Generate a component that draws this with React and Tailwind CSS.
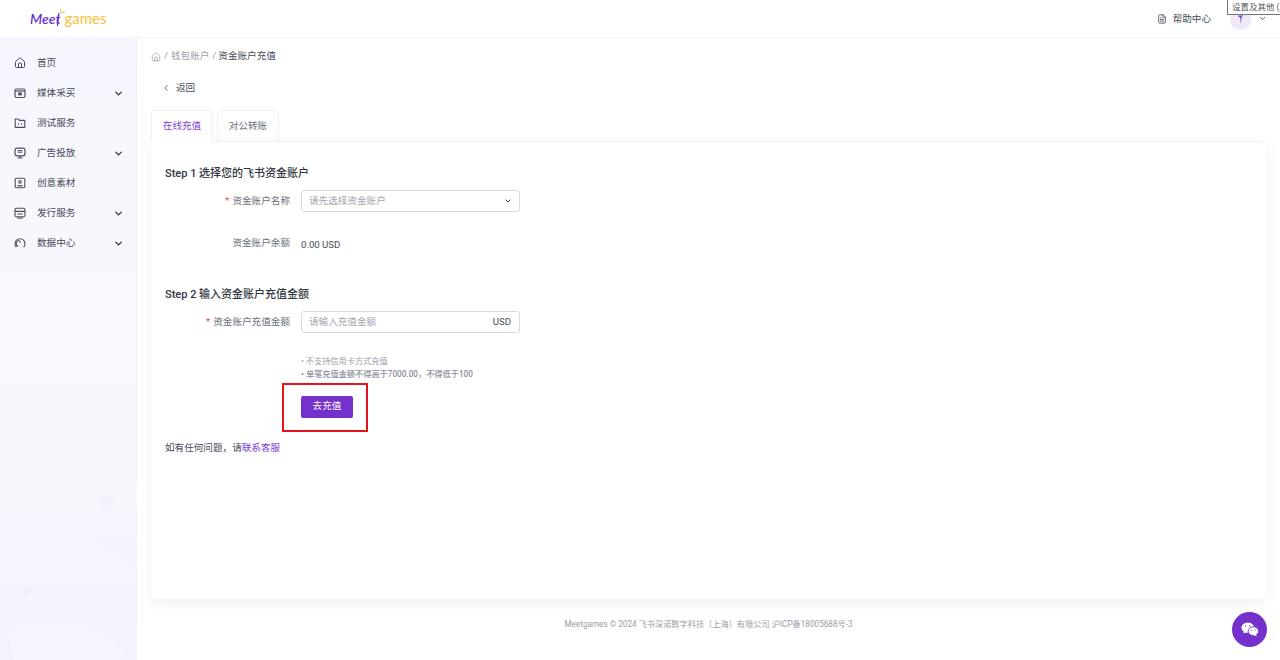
import React from 'react';
import { Home, ChevronDown, ChevronLeft, FileText } from 'lucide-react';

const fontStack = "font-['Roboto','Noto_Sans_CJK_SC',sans-serif]";

const MediaIcon = () => (
    <svg width="12" height="12" viewBox="0 0 12 12" fill="none" stroke="#4b4f5c" strokeWidth="1.2">
        <rect x="1" y="2" width="10" height="8.5" rx="1.5" />
        <path d="M1 4h10" />
        <rect x="4.2" y="5.4" width="3.6" height="3" fill="#4b4f5c" stroke="none" />
    </svg>
);

const FolderIcon = () => (
    <svg width="12" height="12" viewBox="0 0 12 12" fill="none" stroke="#4b4f5c" strokeWidth="1.1">
        <path d="M1.2 2h3.2l1 1.4h5.4v7H1.2z" strokeLinejoin="round" />
        <path d="M5 6l-1 1 1 1M7 6l1 1-1 1" strokeWidth="0.8" />
    </svg>
);

const AdIcon = () => (
    <svg width="12" height="12" viewBox="0 0 12 12" fill="none" stroke="#4b4f5c" strokeWidth="1.2">
        <rect x="1" y="1.2" width="10" height="7.6" rx="2" />
        <path d="M3.5 11h5M6 9v2" />
        <path d="M3.6 3.6h4.8M3.6 5.2h4.8" strokeWidth="1" />
    </svg>
);

const CreativeIcon = () => (
    <svg width="12" height="12" viewBox="0 0 12 12" fill="none" stroke="#4b4f5c" strokeWidth="1.1">
        <rect x="1.2" y="1.2" width="9.6" height="9.6" rx="1.2" />
        <circle cx="6" cy="4.8" r="1.3" />
        <path d="M3.4 8.8h5.2" strokeWidth="1.3" />
    </svg>
);

const PublishIcon = () => (
    <svg width="12" height="12" viewBox="0 0 12 12" fill="none" stroke="#4b4f5c" strokeWidth="1.1">
        <rect x="1" y="1.2" width="10" height="8.6" rx="1.6" />
        <path d="M1 4.4h10M3.4 7h5.2" />
        <path d="M3 11h6" />
    </svg>
);

const DataIcon = () => (
    <svg width="12" height="12" viewBox="0 0 12 12" fill="none" stroke="#4b4f5c" strokeWidth="1.1">
        <path d="M2.4 10.2A5 5 0 1 1 9.6 10.2" />
        <path d="M4.2 9.4A3 3 0 0 1 5.6 3.6" />
        <path d="M6 6V4" />
    </svg>
);

const menu = [
    { label: '首页', icon: <Home size={12} color="#4b4f5c" /> },
    { label: '媒体采买', icon: <MediaIcon />, arrow: true },
    { label: '测试服务', icon: <FolderIcon /> },
    { label: '广告投放', icon: <AdIcon />, arrow: true },
    { label: '创意素材', icon: <CreativeIcon /> },
    { label: '发行服务', icon: <PublishIcon />, arrow: true },
    { label: '数据中心', icon: <DataIcon />, arrow: true },
];

const Sidebar = () => (
    <aside className="relative w-[137px] shrink-0 bg-gradient-to-b from-[#f6f7fe] via-[#f8f9fe] to-[#f4f3fd] border-r border-[#f0f1f8] pt-[10px]">
        <svg className="absolute left-0 bottom-0" width="137" height="240" viewBox="0 0 137 240" fill="none">
            <path d="M88 40C105 50 122 55 137 62V88C118 72 105 66 88 60z" fill="#f6f6fd" />
            <path d="M90 122C105 128 122 138 137 146V120C120 112 105 112 90 122z" fill="#f5f4fd" />
            <circle cx="107" cy="83" r="8" fill="#f3f1fc" />
            <circle cx="27" cy="171" r="4" fill="#f1effb" />
            <circle cx="68" cy="206" r="4" fill="#f1effb" />
            <circle cx="97" cy="229" r="4" fill="#f1effb" />
            <path d="M0 192C50 178 100 190 137 206V240H0z" fill="#f4f2fc" />
            <path d="M8 215C20 192 85 190 125 230L120 240H14z" fill="#f6f5fd" />
        </svg>
        <nav className="relative">
            {menu.map((item) => (
                <div key={item.label} className="h-[30px] flex items-center pl-[14px] pr-[12px] text-[9.6px] text-[#474a58]">
                    {item.icon}
                    <span className="ml-[11px] flex-1">{item.label}</span>
                    {item.arrow && <ChevronDown size={11} strokeWidth={3} color="#333742" />}
                </div>
            ))}
        </nav>
    </aside>
);

const FormRow = ({ label, required, children }) => (
    <div className="flex items-center">
        <div className="w-[125px] text-right text-[9.6px] text-[#6b6f7b]">
            {required && <span className="text-[#e5484d] mr-[3px]">*</span>}
            {label}
        </div>
        <div className="ml-[11px]">{children}</div>
    </div>
);

const App = () => {
    return (
        <div className={`relative w-[1280px] h-[660px] overflow-hidden flex flex-col bg-white ${fontStack}`}>
            <header className="h-[38px] shrink-0 flex items-center border-b border-[#f3f4fa] pl-[30px] pr-[13px]">
                <div className="relative text-[14px] leading-none font-['Lato',sans-serif]">
                    <span className="italic font-semibold text-[#6a2fd6]">Meet</span>
                    <span className="text-[15px] text-[#fbbf3c] ml-[4px]">games</span>
                    <svg className="absolute left-[24px] top-[-3px]" width="12" height="20" viewBox="0 0 12 20" fill="none">
                        <path d="M7 1L6.6 4.4H11" stroke="#fbbf3c" strokeWidth="1" />
                        <path d="M5 5L3.4 18" stroke="#6a2fd6" strokeWidth="1.2" />
                    </svg>
                </div>
                <div className="ml-auto flex items-center text-[9.6px] text-[#474a58] pt-[1px]">
                    <FileText size={10} color="#4b4f5c" />
                    <span className="ml-[6px]">帮助中心</span>
                    <div className="ml-[19px] w-[21px] h-[21px] rounded-full bg-[#efe8fb] flex items-center justify-center">
                        <svg width="6" height="12" viewBox="0 0 6 12" fill="none">
                            <path d="M0.5 2.5H5.5L3.8 3.6L2.6 11L2.4 4H0.8z" fill="#6a2fd6" />
                            <path d="M3.5 0.5L4.5 2H3z" fill="#fbbf3c" />
                        </svg>
                    </div>
                    <ChevronDown size={9} strokeWidth={2.5} color="#555" className="ml-[7px] mb-[1px]" />
                </div>
            </header>

            <div className="absolute top-[-1px] left-[1227px] h-[16px] w-[60px] overflow-hidden whitespace-nowrap bg-white border border-[#767676] pl-[4px] text-[8.5px] leading-[14px] text-[#555]">
                设置及其他 (Alt+F)
            </div>

            <div className="flex-1 flex min-h-0">
                <Sidebar />
                <main className="flex-1 flex flex-col pl-[14px] pr-[14px] min-w-0">
                    <div className="h-[37px] flex items-center text-[9.6px] text-[#9a9ea9]">
                        <Home size={10} color="#8a8f9b" strokeWidth={1.5} />
                        <span className="mx-[3px]">/</span>
                        <span>钱包账户</span>
                        <span className="ml-[3px] mr-[2px]">/</span>
                        <span className="text-[#474a58]">资金账户充值</span>
                    </div>

                    <div className="h-[26px] mb-[9px] flex items-center pl-[10px] text-[9.6px] text-[#474a58]">
                        <ChevronLeft size={10} color="#4e5160" />
                        <span className="ml-[5px]">返回</span>
                    </div>

                    <div className="flex h-[31px] gap-[4px] text-[9.6px]">
                        <div className="w-[62px] border border-b-0 border-[#f0f1f8] rounded-t-[4px] bg-white text-[#7b3fd9] flex items-center justify-center relative z-10 h-[32px]">
                            在线充值
                        </div>
                        <div className="w-[62px] border border-b-0 border-[#f0f1f8] rounded-t-[4px] text-[#6b6f7b] flex items-center justify-center">
                            对公转账
                        </div>
                    </div>

                    <section className="h-[458px] rounded-b-[6px] rounded-tr-[6px] border-t border-[#f0f1f8] bg-white shadow-[0_4px_14px_rgba(80,90,160,0.09)] px-[14px] pt-[25px]">
                        <h3 className="text-[11px] leading-[14px] font-medium text-[#333742]">
                            Step 1 选择您的飞书资金账户
                        </h3>
                        <div className="mt-[9px]">
                            <FormRow label="资金账户名称" required>
                                <div className="w-[219px] h-[22px] border border-[#d9dbe3] rounded-[3px] flex items-center justify-between pl-[7px] pr-[7px] text-[9.6px] text-[#a3a6b0]">
                                    <span>请先选择资金账户</span>
                                    <ChevronDown size={8} strokeWidth={3} color="#333742" />
                                </div>
                            </FormRow>
                        </div>
                        <div className="mt-[20px] h-[22px] flex items-center">
                            <FormRow label="资金账户余额">
                                <span className="text-[9.6px] text-[#474a58]">0.00 USD</span>
                            </FormRow>
                        </div>

                        <h3 className="mt-[34px] text-[11px] leading-[14px] font-medium text-[#333742]">
                            Step 2 输入资金账户充值金额
                        </h3>
                        <div className="mt-[9px]">
                            <FormRow label="资金账户充值金额" required>
                                <div className="w-[219px] h-[22px] border border-[#d9dbe3] rounded-[3px] flex items-center justify-between pl-[7px] pr-[8px] text-[9.6px] text-[#a3a6b0]">
                                    <span>请输入充值金额</span>
                                    <span className="text-[#474a58]">USD</span>
                                </div>
                            </FormRow>
                        </div>

                        <div className="mt-[22px] ml-[136px] text-[8.2px] leading-[13px] text-[#9a9ea9]">
                            <div>• 不支持信用卡方式充值</div>
                            <div className="font-medium text-[#8a8e99]">• 单笔充值金额不得高于7000.00，不得低于100</div>
                        </div>

                        <div className="ml-[117px] mt-[2px] w-[86px] h-[49px] border-2 border-[#e8121c] flex items-center pl-[17px] pb-[2px]">
                            <button className="w-[52px] h-[22px] rounded-[2px] bg-[#7431cb] text-white text-[9.6px]">去充值</button>
                        </div>

                        <p className="mt-[9px] text-[9.6px] text-[#474a58]">
                            如有任何问题，请<span className="text-[#7b3fd9]">联系客服</span>
                        </p>
                    </section>

                    <footer className="flex-1 flex items-center justify-center text-[8.2px] text-[#9a9ea9] pb-[10px]">
                        Meetgames © 2024 飞书深诺数字科技（上海）有限公司 沪ICP备18005688号-3
                    </footer>
                </main>
            </div>

            <button className="absolute right-[13px] bottom-[13px] w-[35px] h-[35px] rounded-full bg-[#7431cb] flex items-center justify-center">
                <svg width="18" height="15" viewBox="0 0 18 15" fill="white">
                    <ellipse cx="6.8" cy="5.6" rx="6.4" ry="5.2" />
                    <path d="M3 9l-0.6 2.6L6 10z" />
                    <ellipse cx="12.4" cy="9.2" rx="5.2" ry="4.4" stroke="#7431cb" strokeWidth="0.9" />
                    <path d="M15 12.5l0.8 2-3-1.2z" />
                    <circle cx="4.6" cy="4" r="0.7" fill="#7431cb" />
                    <circle cx="8.6" cy="4" r="0.7" fill="#7431cb" />
                    <circle cx="10.6" cy="8" r="0.6" fill="#7431cb" />
                    <circle cx="14.2" cy="8" r="0.6" fill="#7431cb" />
                </svg>
            </button>
        </div>
    );
};

export default App;
